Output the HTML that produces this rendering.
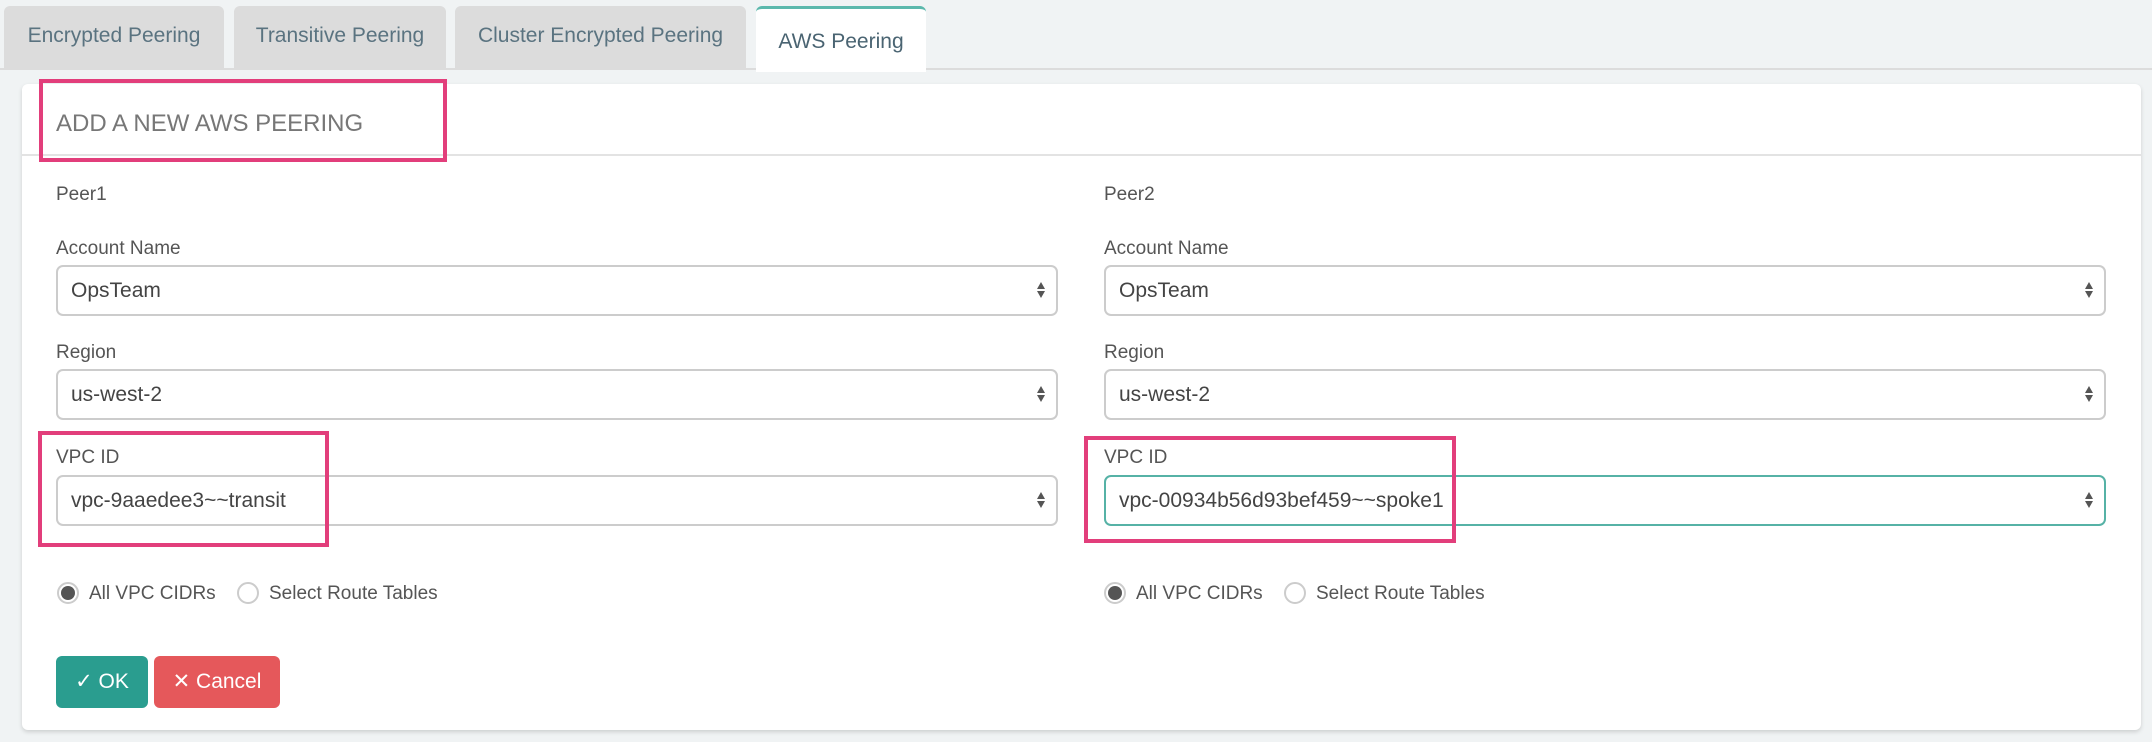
<!DOCTYPE html>
<html><head><style>
*{box-sizing:border-box;margin:0;padding:0}
body{width:2152px;height:742px;background:#f0f3f4;font-family:"Liberation Sans",Arial,sans-serif;position:relative;overflow:hidden}
.tab{position:absolute;top:6px;height:62px;background:#dcdcdc;border-radius:6px 6px 0 0;color:#5a7380;font-size:21px;text-align:center;line-height:60px}
.tab.active{background:#fff;border-top:3px solid #5bb8ac;top:6px;height:66px;color:#4a6472;line-height:66px}
.line{position:absolute;left:0;right:0;top:68px;height:2px;background:#dcdcdc}
.panel{position:absolute;left:22px;top:84px;width:2119px;height:646px;background:#fff;border-radius:6px;box-shadow:0 2px 4px rgba(0,0,0,.15)}
.hdr{position:absolute;left:0;right:0;top:70px;height:2px;background:#e3e3e3}
.title{position:absolute;left:34px;top:16px;font-size:24px;color:#777;line-height:48px}
.lbl{position:absolute;font-size:19px;color:#555}
.sel{position:absolute;height:51px;border:2px solid #ccc;border-radius:7px;font-size:21px;color:#444;padding-left:13px;line-height:47px}
.sel.f{border-color:#56b2a6}
.arr{position:absolute;right:10px;top:13px;width:10px;height:20px}
.pink{position:absolute;border:4px solid #e23e7b}
.radio{position:absolute;width:22px;height:22px;border:2px solid #ccc;border-radius:50%}
.radio.on::after{content:"";position:absolute;left:2px;top:2px;width:14px;height:14px;border-radius:50%;background:#555}
.rt{position:absolute;font-size:19px;color:#555}
.btn{position:absolute;top:656px;height:52px;border-radius:6px;color:#fff;font-size:21px;line-height:52px;text-align:center}
</style></head><body>
<div class="tab" style="left:4px;width:220px">Encrypted Peering</div>
<div class="tab" style="left:234px;width:212px">Transitive Peering</div>
<div class="tab" style="left:455px;width:291px">Cluster Encrypted Peering</div>
<div class="line"></div>
<div class="tab active" style="left:756px;width:170px">AWS Peering</div>
<div class="panel"><div class="hdr"></div><div class="title">ADD A NEW AWS PEERING</div></div>

<div class="lbl" style="left:56px;top:184px">Peer1</div>
<div class="lbl" style="left:56px;top:238px">Account Name</div>
<div class="sel" style="left:56px;top:265px;width:1002px">OpsTeam<svg class="arr" viewBox="0 0 10 20"><path d="M5 2L9 9H1Z M1 11H9L5 18Z" fill="#555"/></svg></div>
<div class="lbl" style="left:56px;top:342px">Region</div>
<div class="sel" style="left:56px;top:369px;width:1002px">us-west-2<svg class="arr" viewBox="0 0 10 20"><path d="M5 2L9 9H1Z M1 11H9L5 18Z" fill="#555"/></svg></div>
<div class="lbl" style="left:56px;top:447px">VPC ID</div>
<div class="sel" style="left:56px;top:475px;width:1002px">vpc-9aaedee3~~transit<svg class="arr" viewBox="0 0 10 20"><path d="M5 2L9 9H1Z M1 11H9L5 18Z" fill="#555"/></svg></div>
<div class="radio on" style="left:57px;top:582px"></div><div class="rt" style="left:89px;top:583px">All VPC CIDRs</div>
<div class="radio" style="left:237px;top:582px"></div><div class="rt" style="left:269px;top:583px">Select Route Tables</div>

<div class="lbl" style="left:1104px;top:184px">Peer2</div>
<div class="lbl" style="left:1104px;top:238px">Account Name</div>
<div class="sel" style="left:1104px;top:265px;width:1002px">OpsTeam<svg class="arr" viewBox="0 0 10 20"><path d="M5 2L9 9H1Z M1 11H9L5 18Z" fill="#555"/></svg></div>
<div class="lbl" style="left:1104px;top:342px">Region</div>
<div class="sel" style="left:1104px;top:369px;width:1002px">us-west-2<svg class="arr" viewBox="0 0 10 20"><path d="M5 2L9 9H1Z M1 11H9L5 18Z" fill="#555"/></svg></div>
<div class="lbl" style="left:1104px;top:447px">VPC ID</div>
<div class="sel f" style="left:1104px;top:475px;width:1002px">vpc-00934b56d93bef459~~spoke1<svg class="arr" viewBox="0 0 10 20"><path d="M5 2L9 9H1Z M1 11H9L5 18Z" fill="#555"/></svg></div>
<div class="radio on" style="left:1104px;top:582px"></div><div class="rt" style="left:1136px;top:583px">All VPC CIDRs</div>
<div class="radio" style="left:1284px;top:582px"></div><div class="rt" style="left:1316px;top:583px">Select Route Tables</div>

<div class="btn" style="left:56px;width:92px;background:#2a9d8f">&#10003; OK</div>
<div class="btn" style="left:154px;width:126px;background:#e5585b">&#10005; Cancel</div>

<div class="pink" style="left:39px;top:79px;width:408px;height:83px"></div>
<div class="pink" style="left:38px;top:431px;width:291px;height:116px"></div>
<div class="pink" style="left:1084px;top:436px;width:372px;height:107px"></div>
</body></html>
